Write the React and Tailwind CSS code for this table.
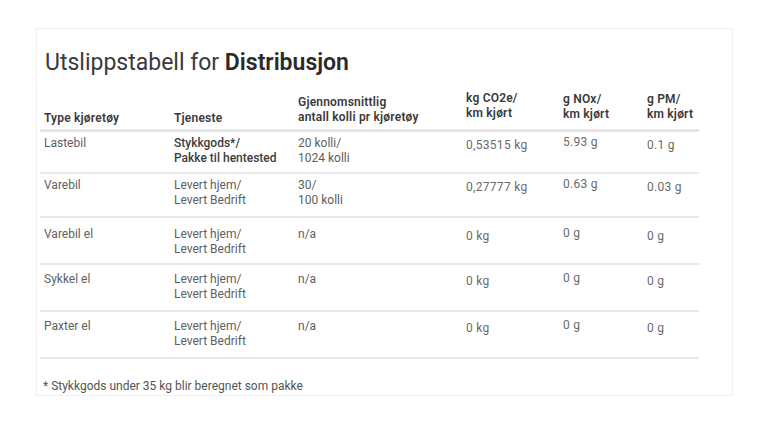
import React from 'react'

const cols = 'grid grid-cols-[130px_124px_168px_97px_84px_56px]'

const rows = [
  {
    type: 'Lastebil',
    service: ['Stykkgods*/', 'Pakke til hentested'],
    strong: true,
    avg: ['20 kolli/', '1024 kolli'],
    co2: '0,53515 kg',
    nox: '5.93 g',
    pm: '0.1 g',
    h: 'h-[42px]',
    pt: 'pt-[4px]',
  },
  {
    type: 'Varebil',
    service: ['Levert hjem/', 'Levert Bedrift'],
    avg: ['30/', '100 kolli'],
    co2: '0,27777 kg',
    nox: '0.63 g',
    pm: '0.03 g',
    h: 'h-[44px]',
    pt: 'pt-[4px]',
  },
  {
    type: 'Varebil el',
    service: ['Levert hjem/', 'Levert Bedrift'],
    avg: ['n/a'],
    co2: '0 kg',
    nox: '0 g',
    pm: '0 g',
    h: 'h-[47px]',
    pt: 'pt-[9px]',
  },
  {
    type: 'Sykkel el',
    service: ['Levert hjem/', 'Levert Bedrift'],
    avg: ['n/a'],
    co2: '0 kg',
    nox: '0 g',
    pm: '0 g',
    h: 'h-[47px]',
    pt: 'pt-[7px]',
  },
  {
    type: 'Paxter el',
    service: ['Levert hjem/', 'Levert Bedrift'],
    avg: ['n/a'],
    co2: '0 kg',
    nox: '0 g',
    pm: '0 g',
    h: 'h-[47px]',
    pt: 'pt-[7px]',
  },
]

const Lines = ({ items }) => (
  <>
    {items.map((t) => (
      <div key={t}>{t}</div>
    ))}
  </>
)

const App = () => {
  return (
    <div className="w-[768px] h-[428px] bg-white pt-[28px] pl-[36px] font-['Roboto','Liberation_Sans',sans-serif]">
      <div className="w-[697px] h-[368px] border border-[#f0f0f0] pl-[3px]">
        <h1 className="pl-[5px] pt-[19px] text-[23px] leading-[30px] text-[#3a3a3a]">
          Utslippstabell for <span className="font-semibold text-[#2a2a2a]">Distribusjon</span>
        </h1>

        <div className="w-[659px] mt-[3px]">
          <div className={`${cols} h-[51px] items-end border-b-[3px] border-[#e6e6e6] text-[12px] leading-[15px] font-semibold tracking-[0.2px] text-[#3a3a3a]`}>
            <div className="pl-[4px] pb-[3px]">Type kjøretøy</div>
            <div className="pl-[4px] pb-[3px]">Tjeneste</div>
            <div className="pl-[4px] pb-[4px]">
              <div>Gjennomsnittlig</div>
              <div>antall kolli pr kjøretøy</div>
            </div>
            <div className="pl-[4px] pb-[8px]">
              <div>kg CO2e/</div>
              <div>km kjørt</div>
            </div>
            <div className="pl-[4px] pb-[7px]">
              <div>g NOx/</div>
              <div>km kjørt</div>
            </div>
            <div className="pl-[4px] pb-[7px]">
              <div>g PM/</div>
              <div>km kjørt</div>
            </div>
          </div>

          {rows.map((r) => (
            <div
              key={r.type}
              className={`${cols} ${r.h} ${r.pt} border-b-2 border-[#e8e8e8] text-[12px] leading-[15px] text-[#606060]`}
            >
              <div className="pl-[4px]">{r.type}</div>
              <div className={`pl-[4px] ${r.strong ? 'font-medium text-[#3c3c3c]' : ''}`}>
                <Lines items={r.service} />
              </div>
              <div className="pl-[4px]">
                <Lines items={r.avg} />
              </div>
              <div className="pl-[4px] pt-[2px] text-[12px] tracking-[0.3px] text-[#6a6a6a]">{r.co2}</div>
              <div className="pl-[4px] -mt-[1px] text-[12px] tracking-[0.3px] text-[#6a6a6a]">{r.nox}</div>
              <div className="pl-[4px] pt-[2px] text-[12px] tracking-[0.3px] text-[#6a6a6a]">{r.pm}</div>
            </div>
          ))}
        </div>

        <p className="pl-[3px] mt-[20px] text-[12px] leading-[14px] text-[#555]">
          * Stykkgods under 35 kg blir beregnet som pakke
        </p>
      </div>
    </div>
  )
}

export default App
